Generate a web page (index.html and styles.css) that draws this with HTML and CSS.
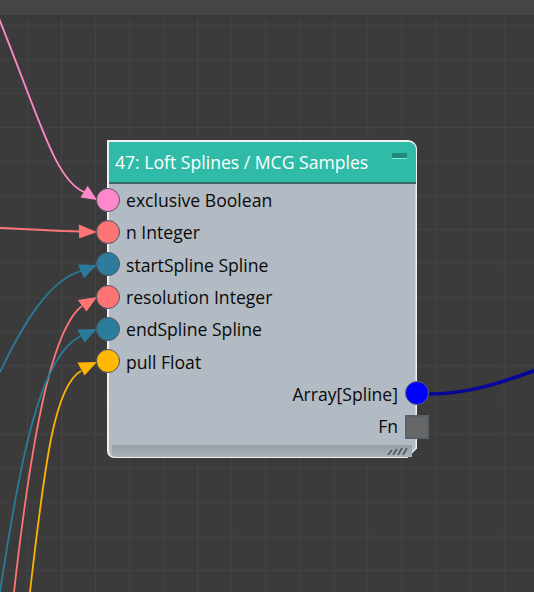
FILE: index.html
```html
<!DOCTYPE html>
<html>
<head>
<meta charset="utf-8">
<link rel="stylesheet" href="styles.css">
</head>
<body>
<div class="app">
  <div class="toolbar"></div>
  <div class="canvas">
    <svg class="wires" width="534" height="575" viewBox="0 17 534 575">
      <path class="w pink" d="M -2,16 C 40,120 55,180 84,192"/>
      <polygon class="pinkf" points="97,200 80.4,197.6 87.7,185.8"/>
      <path class="w salmon" d="M 0,228 C 30,229 55,231 80,231.5"/>
      <polygon class="salmonf" points="97,232 79.2,238.5 78.8,224.5"/>
      <path class="w blue" d="M 0,372 C 25,320 50,280 81,271"/>
      <polygon class="bluef" points="97,265 83.8,278.3 78,264.5"/>
      <path class="w salmon" d="M 14,592 C 30,450 50,330 82,306"/>
      <polygon class="salmonf" points="97,297 86.6,311.5 77.7,300"/>
      <path class="w blue" d="M 0,592 C 20,460 40,355 81,336"/>
      <polygon class="bluef" points="97,329 84.5,342.6 77.4,329.5"/>
      <path class="w yellow" d="M 30,592 C 45,460 55,385 81,371"/>
      <polygon class="yellowf" points="97,362 84.5,375.6 77.4,362.5"/>
      <path class="w out" d="M 429,394 C 465,394 495,385 536,370"/>
    </svg>

    <div class="node">
      <div class="header">
        <span class="title">47: Loft Splines / MCG Samples</span>
        <span class="min"></span>
      </div>
      <div class="row in"><span class="port c-pink"></span><span>exclusive Boolean</span></div>
      <div class="row in"><span class="port c-salmon"></span><span>n Integer</span></div>
      <div class="row in"><span class="port c-blue"></span><span>startSpline Spline</span></div>
      <div class="row in"><span class="port c-salmon"></span><span>resolution Integer</span></div>
      <div class="row in"><span class="port c-blue"></span><span>endSpline Spline</span></div>
      <div class="row in"><span class="port c-yellow"></span><span>pull Float</span></div>
      <div class="row out"><span>Array[Spline]</span><span class="port c-out"></span></div>
      <div class="row out"><span>Fn</span><span class="fn"></span></div>
      <div class="footer">
        <svg class="hatch" width="22" height="8" viewBox="0 0 22 8">
          <path d="M1,8 L5,3 M6,8 L10,2 M11,8 L15,1 M16,8 L20,1"/>
        </svg>
      </div>
    </div>
  </div>
</div>
</body>
</html>
```
FILE: styles.css
```css
html, body {
  margin: 0;
  padding: 0;
  background: #3b3b3b;
}
.app {
  width: 534px;
  height: 592px;
  display: flex;
  flex-direction: column;
  overflow: hidden;
}
.toolbar {
  height: 15px;
  background: #464646;
  border-bottom: 2px solid #373737;
  position: relative;
  z-index: 2;
}
.canvas {
  flex: 1;
  position: relative;
  background-color: #3b3b3b;
  background-image:
    linear-gradient(to right, #444444 1px, transparent 1px),
    linear-gradient(to bottom, #444444 1px, transparent 1px);
  background-size: 34.05px 34.05px;
  background-position: 27px 8px;
}
.wires {
  position: absolute;
  left: 0;
  top: 0;
}
.w { fill: none; stroke-width: 1.8; }
.pink { stroke: #ff88c8; }
.salmon { stroke: #ff7474; }
.blue { stroke: #2a7b9b; }
.yellow { stroke: #ffb400; }
.out { stroke: #06069a; stroke-width: 3.6; }
.pinkf { fill: #ff88c8; }
.salmonf { fill: #ff7474; }
.bluef { fill: #2a7b9b; }
.yellowf { fill: #ffb400; }

.node {
  position: absolute;
  left: 107px;
  top: 123px;
  width: 310px;
  font-family: "Open Sans", "Noto Sans", sans-serif;
}
.node::before {
  content: "";
  position: absolute;
  inset: 0;
  background: #eef0f2;
  border-radius: 0 9px 0 7px;
  clip-path: polygon(0 0, 100% 0, 100% calc(100% - 10px), calc(100% - 10px) 100%, 0 100%);
}
.node::after {
  content: "";
  position: absolute;
  inset: 1.5px;
  background: #b2bbc3;
  border-radius: 0 8px 0 6px;
  clip-path: polygon(0 0, 100% 0, 100% calc(100% - 9px), calc(100% - 9px) 100%, 0 100%);
}
.node > * {
  position: relative;
  z-index: 1;
}
.header {
  margin: 1.5px 1.5px 0;
  height: 40px;
  background: #2fbba7;
  border-radius: 0 8px 0 0;
  border-bottom: 2px solid #3a6669;
  display: flex;
  align-items: center;
  justify-content: space-between;
  padding: 0 8.5px 0 6.5px;
}
.title {
  color: #ffffff;
  font-size: 17.6px;
  line-height: 1;
  margin-top: 2px;
}
.min {
  align-self: flex-start;
  margin-top: 11.5px;
  width: 15px;
  height: 5px;
  background: #25877a;
  border-bottom: 1.5px solid #6ff0e0;
}
.row {
  height: 32.3px;
  display: flex;
  align-items: center;
  font-size: 17.6px;
  color: #0a0a0a;
  line-height: 1;
}
.row span:not(.port) {
  margin-top: 2.5px;
}
.port {
  width: 24px;
  height: 24px;
  box-sizing: border-box;
  border-radius: 50%;
  border: 1.5px solid #4e5966;
  flex: none;
}
.row.in .port {
  margin-left: -11px;
  margin-right: 6px;
}
.row.out {
  justify-content: flex-end;
}
.row.out .port, .row.out .fn {
  margin-left: 7px;
  margin-right: -12px;
}
.c-pink { background: #ff88cc; }
.c-salmon { background: #fe7373; }
.c-blue { background: #2c7c9b; }
.c-yellow { background: #ffb900; }
.c-out { background: #0000ff; border-color: #566273; }
.fn {
  width: 24px;
  height: 24px;
  box-sizing: border-box;
  background: #676767;
  border: 2px solid #56616c;
  flex: none;
}
.footer {
  margin: 3px 5px 1.5px 4.5px;
  height: 12px;
  background: linear-gradient(#979fa7, #a9b1b9);
  border-radius: 0 0 0 5px;
  display: flex;
  justify-content: flex-end;
  align-items: flex-end;
  padding-right: 3px;
}
.hatch {
  margin-bottom: 2px;
}
.hatch path {
  stroke: #4f555b;
  stroke-width: 1.6;
  fill: none;
}
```
